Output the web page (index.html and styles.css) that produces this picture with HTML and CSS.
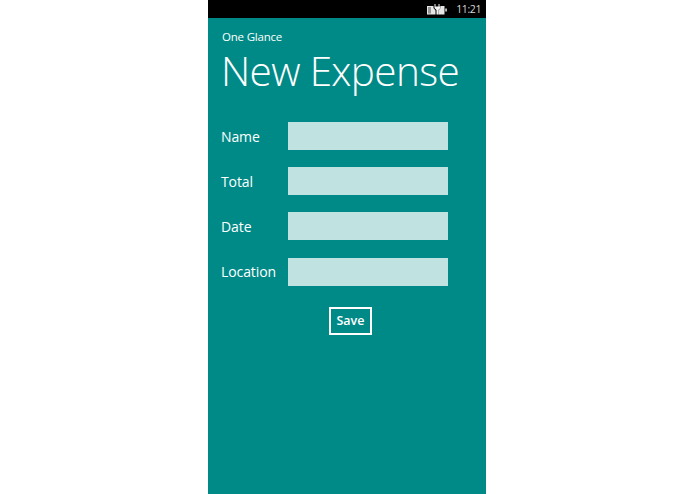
FILE: index.html
```html
<!DOCTYPE html>
<html lang="en">
<head>
    <meta charset="UTF-8">
    <title>New Expense</title>
    <link rel="stylesheet" href="styles.css">
</head>
<body>

    <div id="phone">

        <div id="status_bar">
            <svg id="battery_icon" width="20" height="11" viewBox="0 0 20 11">
                <rect fill="#e6e6e6" x="0" y="2" width="17.500" height="8.500"/>
                <rect fill="#000" x="1" y="3" width="3" height="6.500" opacity="0.35"/>
                <path fill="#000" d="M6.500 0h7v4l-2 2.500V11h-3V6.500l-2-2.500z"/>
                <path fill="#f4f4f4" d="M7.500 0h1v2.500h3V0h1v2.500h1V4l-2 2v4.500H9.500V6l-2-2V2.500h0z"/>
                <rect fill="#e6e6e6" x="18.300" y="4.500" width="1.500" height="3"/>
            </svg>
            <span id="clock">11:21</span>
        </div>

        <div id="content">
            <div id="app_name">One Glance</div>
            <h1 id="page_title">New Expense</h1>

            <div id="expense_form">
                <div class="form_row">
                    <label class="form_label">Name</label>
                    <div class="form_input"></div>
                </div>
                <div class="form_row">
                    <label class="form_label">Total</label>
                    <div class="form_input"></div>
                </div>
                <div class="form_row">
                    <label class="form_label">Date</label>
                    <div class="form_input"></div>
                </div>
                <div class="form_row">
                    <label class="form_label">Location</label>
                    <div class="form_input"></div>
                </div>
            </div>

            <div id="save_wrapper">
                <div id="save_button">Save</div>
            </div>
        </div>

    </div>

</body>
</html>
```

FILE: styles.css
```css
*{
    margin: 0;
    padding: 0;
    box-sizing: border-box;
}

body{
    font-family: 'Open Sans', 'Noto Sans', sans-serif;
    background-color: #fff;
    color: #fff;
    overflow: hidden;
}


#phone{
    width: 278px;
    height: 494px;
    margin-left: 208px;
    background-color: #008a87;
    display: flex;
    flex-direction: column;
}


#status_bar{
    height: 18px;
    background-color: #000;
    display: flex;
    justify-content: flex-end;
    align-items: center;
    padding-right: 5px;
    color: #d8d8d8;
}

#battery_icon{
    margin-right: 9px;
}

#clock{
    font-size: 10.5px;
    letter-spacing: -0.4px;
}


#content{
    padding: 12px 38px 0 13px;
}

#app_name{
    font-size: 11.5px;
    letter-spacing: -0.2px;
    line-height: 14px;
    padding-left: 1px;
}

#page_title{
    font-weight: 300;
    font-size: 40.5px;
    letter-spacing: -0.65px;
    line-height: 52px;
    margin-top: 1px;
    white-space: nowrap;
}


#expense_form{
    margin-top: 25px;
    display: flex;
    flex-direction: column;
    gap: 17.2px;
}

.form_row{
    display: flex;
    align-items: center;
}

.form_label{
    width: 67px;
    font-size: 14px;
    letter-spacing: -0.1px;
}

.form_input{
    width: 160px;
    height: 28px;
    background-color: #c0e3e2;
}


#save_wrapper{
    margin-top: 21px;
    padding-left: 108px;
}

#save_button{
    width: 43px;
    height: 28px;
    border: 2px solid #fff;
    font-weight: 600;
    font-size: 12.5px;
    line-height: 24px;
    text-align: center;
}
```
